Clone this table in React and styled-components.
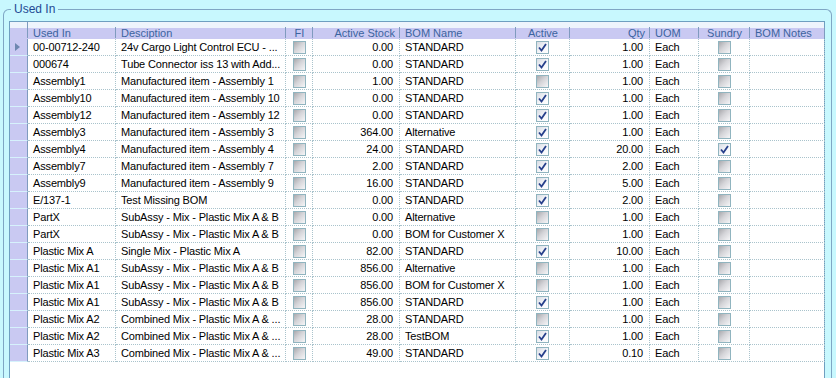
import React from 'react'
import styled, { createGlobalStyle } from 'styled-components'

const GlobalStyle = createGlobalStyle`
	html, body {
		margin: 0;
		padding: 0;
		background: #c8f8fe;
		font-family: 'Liberation Sans', Arial, sans-serif;
		font-size: 11px;
	}
`

const COLS = '18px 88px 170px 27px 87px 116px 54px 80px 49px 51px 75px'

const Page = styled.div`
	padding: 2px 4px 0 3px;
	height: 376px;
	overflow: hidden;
`

const Group = styled.fieldset`
	margin: 0;
	padding: 4px 6px 0 5px;
	border: 1px solid #7fa6c4;
	border-bottom: none;
	border-radius: 6px 6px 0 0;
	height: 400px;
	min-width: 0;
`

const Legend = styled.legend`
	margin-left: 2px;
	padding: 0 3px;
	color: #1f4a94;
	font-size: 12px;
	line-height: 15px;
`

const Grid = styled.div`
	border: 1px solid #6f9fc0;
	border-bottom: none;
	background: #ffffff;
	height: 360px;
`

const HeaderRow = styled.div`
	display: grid;
	grid-template-columns: ${COLS};
	height: 17px;
	background: linear-gradient(to bottom, #eef4fc 0, #eef4fc 6px, #c9c9f2 6px, #c9c9f2 100%);
`

const HeaderCell = styled.div`
	position: relative;
	padding: 6px 5px 0;
	color: #3c64a0;
	line-height: 11px;
	text-align: ${p => p.$align || 'left'};
	white-space: nowrap;
	overflow: hidden;

	&::after {
		content: '';
		position: absolute;
		right: 0;
		top: ${p => (p.$corner ? '0' : '5px')};
		bottom: 1px;
		width: 1px;
		background: #7f9bbf;
	}
`

const Row = styled.div`
	display: grid;
	grid-template-columns: ${COLS};
	height: 17px;
`

const RowHead = styled.div`
	background: #c9c9f2;
	border-bottom: 1px solid #d6f2fc;
	border-right: 1px solid #7f9bbf;
	display: flex;
	align-items: center;
	padding-left: 5px;
`

const Cell = styled.div`
	border-right: 1px dotted #a9c3cc;
	border-bottom: 1px dotted #a9c3cc;
	padding: 0 ${p => (p.$align === 'right' ? '6px' : '5px')};
	line-height: 16px;
	color: #000;
	letter-spacing: -0.15px;
	white-space: nowrap;
	overflow: hidden;
	text-align: ${p => p.$align || 'left'};
	display: ${p => (p.$check ? 'flex' : 'block')};
	align-items: center;
	justify-content: center;
`

const Box = styled.span`
	width: 11px;
	height: 11px;
	border: 1px solid #90b4bf;
	background: ${p =>
		p.$checked
			? 'linear-gradient(135deg, #d8dce4 0%, #f7f8fb 60%, #ffffff 100%)'
			: 'linear-gradient(135deg, #a9a9ad 0%, #d4d4d8 45%, #f6f6f8 100%)'};
	display: flex;
	align-items: center;
	justify-content: center;
`

const Pointer = styled.span`
	width: 0;
	height: 0;
	border-top: 4px solid transparent;
	border-bottom: 4px solid transparent;
	border-left: 5px solid #6f88b0;
`

const Check = ({ checked }) => (
	<Box $checked={checked}>
		{checked && (
			<svg width="9" height="9" viewBox="0 0 9 9">
				<path d="M1 4.5 L3.5 7.5 L8 1" fill="none" stroke="#27408b" strokeWidth="1.8" />
			</svg>
		)}
	</Box>
)

const rows = [
	['00-00712-240', '24v Cargo Light Control ECU - ...', '0.00', 'STANDARD', 1, '1.00', 0],
	['000674', 'Tube Connector iss 13 with Add...', '0.00', 'STANDARD', 1, '1.00', 0],
	['Assembly1', 'Manufactured item - Assembly 1', '1.00', 'STANDARD', 0, '1.00', 0],
	['Assembly10', 'Manufactured item - Assembly 10', '0.00', 'STANDARD', 1, '1.00', 0],
	['Assembly12', 'Manufactured item - Assembly 12', '0.00', 'STANDARD', 1, '1.00', 0],
	['Assembly3', 'Manufactured item - Assembly 3', '364.00', 'Alternative', 1, '1.00', 0],
	['Assembly4', 'Manufactured item - Assembly 4', '24.00', 'STANDARD', 1, '20.00', 1],
	['Assembly7', 'Manufactured item - Assembly 7', '2.00', 'STANDARD', 1, '2.00', 0],
	['Assembly9', 'Manufactured item - Assembly 9', '16.00', 'STANDARD', 1, '5.00', 0],
	['E/137-1', 'Test Missing BOM', '0.00', 'STANDARD', 1, '2.00', 0],
	['PartX', 'SubAssy - Mix - Plastic Mix A & B', '0.00', 'Alternative', 0, '1.00', 0],
	['PartX', 'SubAssy - Mix - Plastic Mix A & B', '0.00', 'BOM for Customer X', 0, '1.00', 0],
	['Plastic Mix A', 'Single Mix - Plastic Mix A', '82.00', 'STANDARD', 1, '10.00', 0],
	['Plastic Mix A1', 'SubAssy - Mix - Plastic Mix A & B', '856.00', 'Alternative', 0, '1.00', 0],
	['Plastic Mix A1', 'SubAssy - Mix - Plastic Mix A & B', '856.00', 'BOM for Customer X', 0, '1.00', 0],
	['Plastic Mix A1', 'SubAssy - Mix - Plastic Mix A & B', '856.00', 'STANDARD', 1, '1.00', 0],
	['Plastic Mix A2', 'Combined Mix - Plastic Mix A & ...', '28.00', 'STANDARD', 0, '1.00', 0],
	['Plastic Mix A2', 'Combined Mix - Plastic Mix A & ...', '28.00', 'TestBOM', 1, '1.00', 0],
	['Plastic Mix A3', 'Combined Mix - Plastic Mix A & ...', '49.00', 'STANDARD', 1, '0.10', 0],
]

const App = () => (
	<Page>
		<GlobalStyle />
		<Group>
			<Legend>Used In</Legend>
			<Grid>
				<HeaderRow>
					<HeaderCell $corner />
					<HeaderCell>Used In</HeaderCell>
					<HeaderCell>Desciption</HeaderCell>
					<HeaderCell $align="center">FI</HeaderCell>
					<HeaderCell $align="right">Active Stock</HeaderCell>
					<HeaderCell>BOM Name</HeaderCell>
					<HeaderCell $align="center">Active</HeaderCell>
					<HeaderCell $align="right">Qty</HeaderCell>
					<HeaderCell>UOM</HeaderCell>
					<HeaderCell $align="center">Sundry</HeaderCell>
					<HeaderCell>BOM Notes</HeaderCell>
				</HeaderRow>
				{rows.map(([code, desc, stock, bom, active, qty, sundry], i) => (
					<Row key={i}>
						<RowHead>{i === 0 && <Pointer />}</RowHead>
						<Cell>{code}</Cell>
						<Cell>{desc}</Cell>
						<Cell $check>
							<Check checked={false} />
						</Cell>
						<Cell $align="right">{stock}</Cell>
						<Cell>{bom}</Cell>
						<Cell $check>
							<Check checked={!!active} />
						</Cell>
						<Cell $align="right">{qty}</Cell>
						<Cell>Each</Cell>
						<Cell $check>
							<Check checked={!!sundry} />
						</Cell>
						<Cell />
					</Row>
				))}
			</Grid>
		</Group>
	</Page>
)

export default App
